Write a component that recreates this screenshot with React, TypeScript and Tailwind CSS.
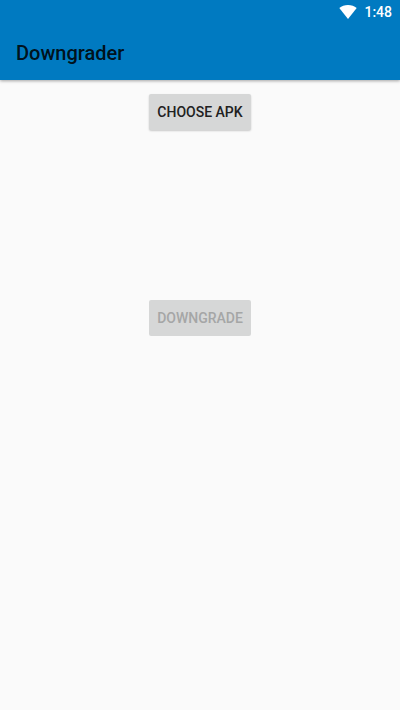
import { useRef, useState } from "react";

function StatusBar() {
  return (
    <div className="flex h-6 items-center justify-end gap-[7px] px-2 text-sm font-medium text-white">
      <svg width="18" height="14" viewBox="0 0 18 14" fill="currentColor" aria-hidden="true">
        <path d="M9 14 0.300 3C2.700 1 5.600 0 9 0s6.300 1 8.700 3L9 14z" />
      </svg>
      <span>1:48</span>
    </div>
  );
}

export default function App() {
  const fileInput = useRef<HTMLInputElement>(null);
  const [apk, setApk] = useState<File | null>(null);

  return (
    <div className="min-h-screen bg-[#fafafa] font-[Roboto,sans-serif]">
      <header className="bg-[#007ac1] shadow-[0_1px_3px_rgba(0,0,0,0.35)]">
        <StatusBar />
        <div className="flex h-14 items-center px-4 pt-0.5">
          <h1 className="text-xl font-medium text-black/87">Downgrader</h1>
        </div>
      </header>

      <main className="flex flex-col items-center px-4 pt-3.5">
        <input
          ref={fileInput}
          type="file"
          accept=".apk"
          aria-label="APK file"
          className="hidden"
          onChange={(e) => setApk(e.target.files?.[0] ?? null)}
        />
        <button
          onClick={() => fileInput.current?.click()}
          className="h-9 rounded-xs bg-[#d6d7d7] px-2 text-sm font-medium text-[#212121] uppercase shadow-[0_1px_2px_rgba(0,0,0,0.2)]"
        >
          Choose APK
        </button>
        <button
          disabled={!apk}
          className="mt-[170px] h-9 rounded-xs bg-[#d6d7d7] px-2 text-sm font-medium text-[#212121] uppercase disabled:text-[#a5a6a6]"
        >
          Downgrade
        </button>
      </main>
    </div>
  );
}
